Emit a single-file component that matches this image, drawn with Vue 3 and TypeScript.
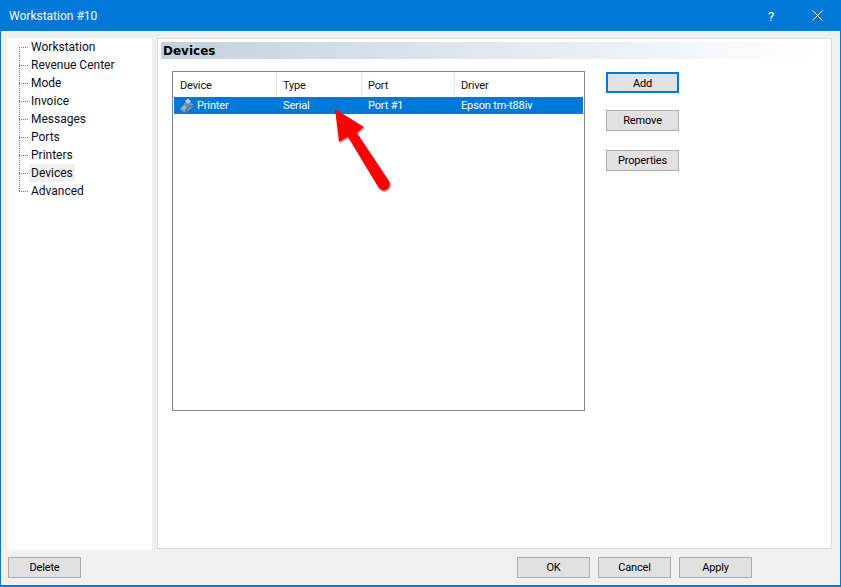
<script setup lang="ts">
const nodes: string[] = ['Workstation', 'Revenue Center', 'Mode', 'Invoice', 'Messages', 'Ports', 'Printers', 'Devices', 'Advanced']
const side: string[] = ['Add', 'Remove', 'Properties']
const cols = [
  { name: 'Device', w: 103 },
  { name: 'Type', w: 85 },
  { name: 'Port', w: 93 },
  { name: 'Driver', w: 128 },
]
</script>

<template>
  <div class="window">
    <header class="titlebar">
      <span class="title">Workstation #10</span>
      <span class="help">?</span>
      <svg class="close" width="11" height="11" viewBox="0 0 11 11"><path d="M.5.5l10 10M10.500.5l-10 10" stroke="#fff" stroke-width="1" fill="none" /></svg>
    </header>
    <div class="main">
      <nav class="tree">
        <div v-for="(n, i) in nodes" :key="n" class="node" :class="{ last: i === nodes.length - 1 }">
          <span class="stub"></span>
          <span class="label" :class="{ current: n === 'Devices' }">{{ n }}</span>
        </div>
      </nav>
      <section class="panel">
        <h2 class="heading">Devices</h2>
        <div class="content">
          <div class="list">
            <div class="head">
              <div v-for="c in cols" :key="c.name" class="th" :style="{ width: c.w + 'px' }">{{ c.name }}</div>
            </div>
            <div class="row">
              <div class="td first" :style="{ width: cols[0].w + 'px' }">
                <svg class="printer" width="16" height="16" viewBox="0 0 16 16">
                  <path d="M.5 10 4.500 6 6 2.500 9.500.5 12 3.500l3.500 3.500v1.500L7.500 15H4.500L.5 12z" fill="#5f93c8" stroke="#2b5688" stroke-width=".8" stroke-linejoin="round" />
                  <path d="M6 2.500 9.500.5 12 3.500 8.500 6z" fill="#b4cde6" />
                  <path d="M2.500 10 5.500 7l2.500 2.500-3 3z" fill="#8fb5db" />
                  <path d="M8 9.500l7.500-2.500M8 9.500 7 15" fill="none" stroke="#2b5688" stroke-width=".6" />
                </svg>
                Printer
              </div>
              <div class="td" :style="{ width: cols[1].w + 'px' }">Serial</div>
              <div class="td" :style="{ width: cols[2].w + 'px' }">Port #1</div>
              <div class="td" :style="{ width: cols[3].w + 'px' }">Epson tm-t88iv</div>
            </div>
          </div>
          <div class="side">
            <button v-for="(b, i) in side" :key="b" class="btn" :class="{ primary: i === 0 }">{{ b }}</button>
          </div>
        </div>
        <svg class="arrow" width="70" height="92" viewBox="0 0 70 92">
          <path d="M1 1 30 19 23 25 55 73a6 6 0 0 1-10.500 6.500L14 29 5 34z" fill="#5a0000" opacity=".3" transform="translate(1 1.500)" />
          <path d="M1 1 30 19 23 25 55 73a6 6 0 0 1-10.500 6.500L14 29 5 34z" fill="#fe0000" />
        </svg>
      </section>
    </div>
    <footer class="foot">
      <button class="btn">Delete</button>
      <div class="spacer"></div>
      <button class="btn">OK</button>
      <button class="btn">Cancel</button>
      <button class="btn">Apply</button>
    </footer>
  </div>
</template>

<style>
html, body { margin: 0; padding: 0; background: #f0f0f0; }
</style>

<style scoped>
.window {
  width: 841px;
  height: 587px;
  box-sizing: border-box;
  display: flex;
  flex-direction: column;
  background: #f0f0f0;
  border: 1px solid #0078d7;
  border-bottom-width: 2px;
  font-family: Roboto, "Noto Sans", sans-serif;
  font-size: 12px;
  color: #000;
  overflow: hidden;
}
.titlebar {
  height: 30px;
  flex: none;
  display: flex;
  align-items: center;
  background: #0078d7;
  color: #fff;
  padding-left: 8px;
}
.title { flex: 1; font-size: 12px; color: #f4f9fd; }
.help { width: 14px; font-size: 13px; margin-right: 30px; }
.close { margin-right: 17px; margin-top: -1px; }
.main {
  flex: 1;
  min-height: 0;
  display: flex;
  gap: 5px;
  padding: 7px 8px 0 6px;
}
.tree {
  width: 145px;
  height: 512px;
  background: #fff;
  box-sizing: border-box;
  padding: 0 0 0 12px;
}
.node {
  height: 18px;
  display: flex;
  align-items: stretch;
}
.stub {
  width: 10px;
  flex: none;
  background-image:
    repeating-linear-gradient(180deg, #7a7a7a 0 1px, transparent 1px 2px),
    repeating-linear-gradient(90deg, #7a7a7a 0 1px, transparent 1px 2px);
  background-repeat: no-repeat;
  background-size: 1px 100%, 100% 1px;
  background-position: left top, left center;
}
.node.last .stub { background-size: 1px 50%, 100% 1px; }
.node:first-child .stub { background-size: 1px 50%, 100% 1px; background-position: left bottom, left center; }
.label {
  padding: 0 2px;
  line-height: 18px;
  white-space: nowrap;
  color: #0c0c1e;
}
.label.current { background: #f0f0f0; }
.panel {
  position: relative;
  flex: 1;
  height: 511px;
  box-sizing: border-box;
  background: #fff;
  border: 1px solid #dcdcdc;
  padding: 3px 3px 0 3px;
}
.heading {
  margin: 0 11px 0 0;
  height: 17px;
  padding-left: 2px;
  font-size: 12px;
  font-weight: 700;
  line-height: 18px;
  font-family: "DejaVu Sans", sans-serif;
  background: linear-gradient(90deg, #c3d0de 0%, #fff 100%);
}
.content {
  display: flex;
  align-items: flex-start;
  gap: 21px;
  padding: 12px 0 0 11px;
}
.list {
  width: 413px;
  height: 340px;
  box-sizing: border-box;
  border: 1px solid #828790;
  padding: 0 1px 0 1px;
  background: #fff;
  font-size: 11px;
  letter-spacing: -.15px;
}
.head {
  display: flex;
  height: 25px;
}
.th {
  box-sizing: border-box;
  border-right: 1px solid #e5e5e5;
  padding-left: 6px;
  line-height: 27px;
  color: #111;
}
.th:last-child { border-right: 0; }
.row {
  display: flex;
  height: 17px;
  background: #0078d7;
  color: #fff;
  line-height: 17px;
}
.td {
  box-sizing: border-box;
  padding-left: 6px;
  white-space: nowrap;
}
.td.first {
  display: flex;
  align-items: center;
  gap: 2px;
  padding-left: 5px;
}
.printer { flex: none; }
.side {
  display: flex;
  flex-direction: column;
  gap: 17px;
  padding-top: 1px;
}
.btn {
  width: 73px;
  height: 21px;
  box-sizing: border-box;
  background: #e1e1e1;
  border: 1px solid #adadad;
  padding: 1px 0 0;
  font: inherit;
  font-size: 11px;
  letter-spacing: -.15px;
  color: #000;
  line-height: 18px;
}
.btn.primary { border: 2px solid #0078d7; }
.side .btn + .btn + .btn { margin-top: 2px; }
.arrow {
  position: absolute;
  left: 176px;
  top: 69px;
}
.foot {
  height: 35px;
  flex: none;
  display: flex;
  align-items: flex-start;
  gap: 8px;
  padding: 7px 88px 0 7px;
  box-sizing: border-box;
}
.spacer { flex: 1; }
</style>
